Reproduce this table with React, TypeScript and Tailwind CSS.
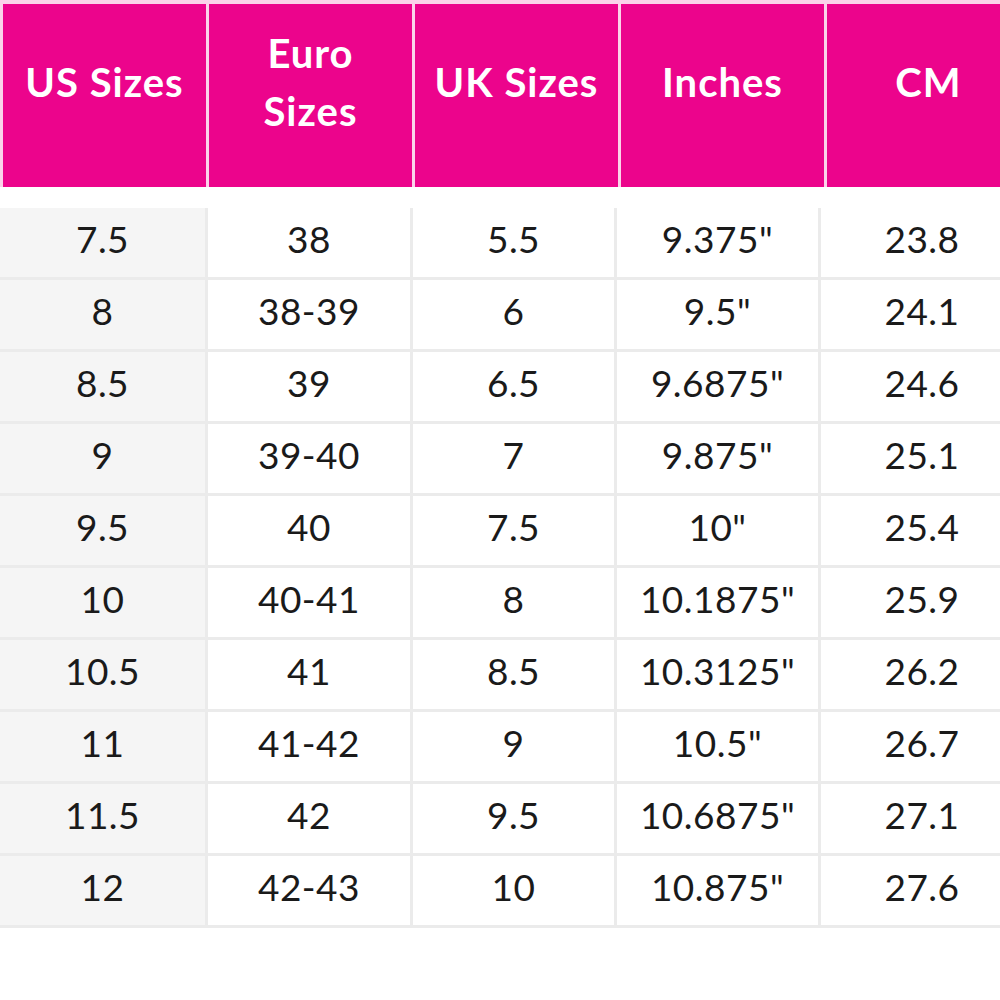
import React from "react";

const headers = [["US Sizes"], ["Euro", "Sizes"], ["UK Sizes"], ["Inches"], ["CM"]];

const rows = [
  ["7.5", "38", "5.5", '9.375"', "23.8"],
  ["8", "38-39", "6", '9.5"', "24.1"],
  ["8.5", "39", "6.5", '9.6875"', "24.6"],
  ["9", "39-40", "7", '9.875"', "25.1"],
  ["9.5", "40", "7.5", '10"', "25.4"],
  ["10", "40-41", "8", '10.1875"', "25.9"],
  ["10.5", "41", "8.5", '10.3125"', "26.2"],
  ["11", "41-42", "9", '10.5"', "26.7"],
  ["11.5", "42", "9.5", '10.6875"', "27.1"],
  ["12", "42-43", "10", '10.875"', "27.6"],
];

// body column widths (incl. left divider)
const colW = ["w-[205px]", "w-[205px]", "w-[204px]", "w-[204px]", "w-[205px]"];

const App = () => {
  return (
    <div className="w-[1000px] h-[1000px] overflow-hidden bg-white font-['Lato',sans-serif]">
      {/* header */}
      <div className="w-[1030px] pl-[3px] pt-[4px] bg-[#fbd3ea] flex gap-[3px]">
        {headers.map((h, i) => (
          <div
            key={i}
            className="w-[203px] shrink-0 h-[183px] bg-[#ec048c] flex flex-col items-center justify-center pb-[27px] text-white font-bold text-[40px] leading-[58px] tracking-[1px]"
          >
            {h.map((line) => (
              <span key={line}>{line}</span>
            ))}
          </div>
        ))}
      </div>

      {/* body */}
      <div className="w-[1030px] mt-[21px]">
        {rows.map((r, i) => (
          <div key={i} className="flex h-[72px] border-b-[3px] border-[#ebebeb]">
            {r.map((c, j) => (
              <div
                key={j}
                className={`${colW[j]} shrink-0 flex items-center justify-center pb-[8px] text-[37px] tracking-[0.5px] text-[#1a1a1a] ${
                  j === 0 ? "bg-[#f5f5f5]" : "bg-white border-l-[3px] border-[#ebebeb]"
                }`}
              >
                {c}
              </div>
            ))}
          </div>
        ))}
      </div>
    </div>
  );
};

export default App;
